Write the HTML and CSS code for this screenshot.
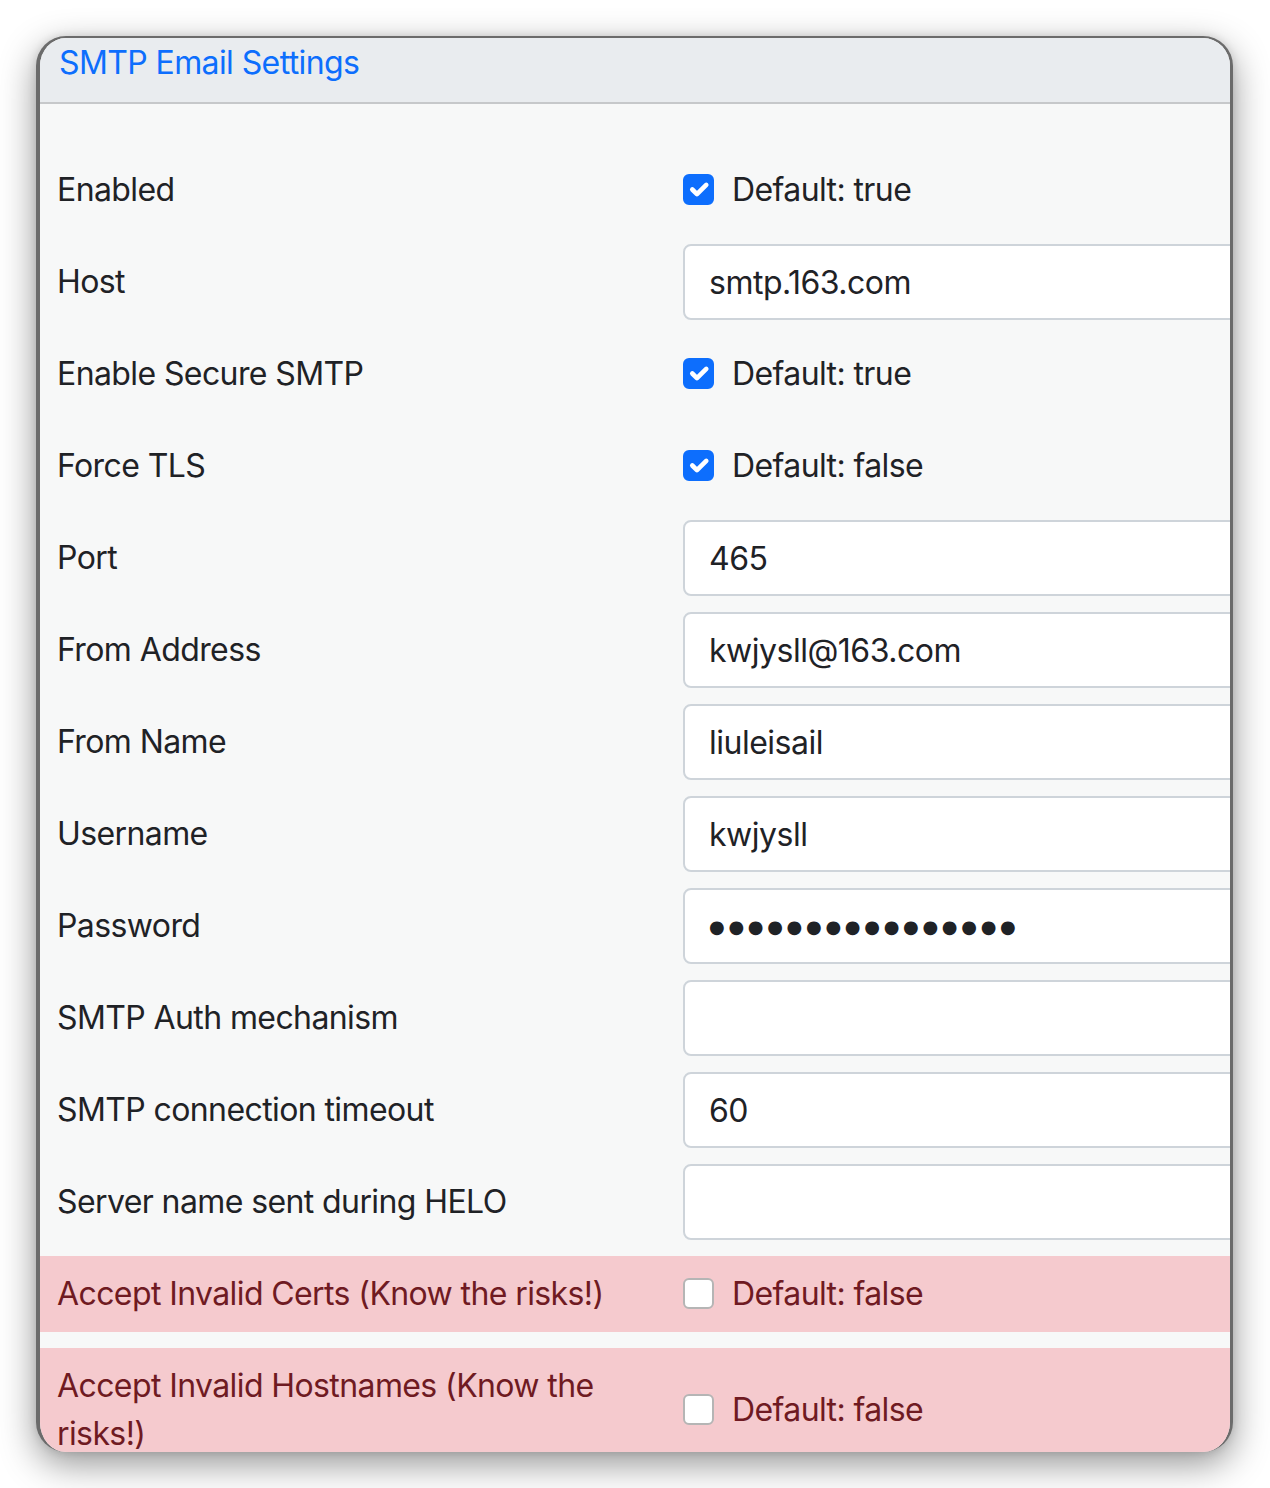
FILE: index.html
```html
<!DOCTYPE html>
<html lang="en">
<head>
<meta charset="utf-8">
<title>SMTP Email Settings</title>
<link rel="stylesheet" href="styles.css">
</head>
<body>
<div class="window">
  <div class="card-header"><span class="title">SMTP Email Settings</span></div>
  <div class="card-body">
    <div class="row">
      <label class="lbl">Enabled</label>
      <div class="ctrl"><span class="cb on"><svg viewBox="0 0 20 20"><path d="M6 10l3 3l6-6"/></svg></span><span class="hint">Default: true</span></div>
    </div>
    <div class="row">
      <label class="lbl">Host</label>
      <div class="ctrl"><input class="field" type="text" value="smtp.163.com"></div>
    </div>
    <div class="row">
      <label class="lbl">Enable Secure SMTP</label>
      <div class="ctrl"><span class="cb on"><svg viewBox="0 0 20 20"><path d="M6 10l3 3l6-6"/></svg></span><span class="hint">Default: true</span></div>
    </div>
    <div class="row">
      <label class="lbl">Force TLS</label>
      <div class="ctrl"><span class="cb on"><svg viewBox="0 0 20 20"><path d="M6 10l3 3l6-6"/></svg></span><span class="hint">Default: false</span></div>
    </div>
    <div class="row">
      <label class="lbl">Port</label>
      <div class="ctrl"><input class="field" type="text" value="465"></div>
    </div>
    <div class="row">
      <label class="lbl">From Address</label>
      <div class="ctrl"><input class="field" type="text" value="kwjysll@163.com"></div>
    </div>
    <div class="row">
      <label class="lbl">From Name</label>
      <div class="ctrl"><input class="field" type="text" value="liuleisail"></div>
    </div>
    <div class="row">
      <label class="lbl">Username</label>
      <div class="ctrl"><input class="field" type="text" value="kwjysll"></div>
    </div>
    <div class="row">
      <label class="lbl">Password</label>
      <div class="ctrl"><div class="field pw"><span class="dots">●●●●●●●●●●●●●●●●</span></div></div>
    </div>
    <div class="row">
      <label class="lbl">SMTP Auth mechanism</label>
      <div class="ctrl"><input class="field" type="text" value=""></div>
    </div>
    <div class="row">
      <label class="lbl">SMTP connection timeout</label>
      <div class="ctrl"><input class="field" type="text" value="60"></div>
    </div>
    <div class="row">
      <label class="lbl">Server name sent during HELO</label>
      <div class="ctrl"><input class="field" type="text" value=""></div>
    </div>
    <div class="row danger">
      <label class="lbl">Accept Invalid Certs (Know the risks!)</label>
      <div class="ctrl"><span class="cb"></span><span class="hint">Default: false</span></div>
    </div>
    <div class="row danger">
      <label class="lbl">Accept Invalid Hostnames (Know the risks!)</label>
      <div class="ctrl"><span class="cb"></span><span class="hint">Default: false</span></div>
    </div>
  </div>
</div>
</body>
</html>
```
FILE: styles.css
```css
html, body {
  margin: 0;
  padding: 0;
  background: #ffffff;
}

body {
  font-family: Inter, "Noto Sans", sans-serif;
  color: #1f2226;
  letter-spacing: -0.6px;
  padding: 36px 0 0 36px;
  min-height: 1488px;
  box-sizing: border-box;
}

.window {
  width: 1190px;
  height: 1414px;
  border-top: 2px solid #6b6b6b;
  border-left: 4px solid #6b6b6b;
  border-right: 3px solid #6b6b6b;
  border-radius: 30px;
  overflow: hidden;
  background: #f7f8f8;
  box-shadow: 0 12px 36px rgba(0, 0, 0, 0.42), 0 0 8px rgba(0, 0, 0, 0.12);
}

.card-header {
  background: #e9ecef;
  border-bottom: 2px solid #c6c8ca;
  height: 62px;
  padding: 1px 0 1px 19px;
}

.title {
  display: block;
  font-size: 32px;
  line-height: 48px;
  color: #0d6efd;
}

.card-body {
  padding-top: 48px;
}

.row {
  display: grid;
  grid-template-columns: 602px 1fr;
  column-gap: 24px;
  align-items: center;
  padding-left: 17px;
  margin-bottom: 16px;
}

.lbl {
  font-size: 32px;
  line-height: 48px;
  padding: 14px 0;
}

.ctrl {
  display: flex;
  align-items: center;
  gap: 18px;
  white-space: nowrap;
}

.hint {
  font-size: 32px;
  line-height: 48px;
}

.cb {
  width: 31px;
  height: 31px;
  box-sizing: border-box;
  border-radius: 6px;
  background: #ffffff;
  border: 2px solid #b5b5b5;
  display: inline-flex;
  align-items: center;
  justify-content: center;
  flex: none;
  margin-top: -2px;
}

.cb.on {
  background: #0d6efd;
  border-color: #0d6efd;
}

.cb svg {
  width: 31px;
  height: 31px;
  flex: none;
}

.cb svg path {
  fill: none;
  stroke: #ffffff;
  stroke-width: 3;
  stroke-linecap: round;
  stroke-linejoin: round;
}

.field {
  box-sizing: border-box;
  width: 620px;
  height: 76px;
  margin: 0;
  padding: 0 24px;
  border: 2px solid #ced4da;
  border-radius: 8px;
  background: #ffffff;
  font-family: Inter, "Noto Sans", sans-serif;
  font-size: 32px;
  letter-spacing: -0.5px;
  color: #1f2226;
  outline: none;
}

.pw {
  display: flex;
  align-items: center;
}

.dots {
  font-family: "DejaVu Sans", sans-serif;
  font-size: 18px;
  letter-spacing: 3.7px;
  color: #1f2226;
}

.danger {
  background: #f5cace;
  color: #6f1a22;
}

.danger .hint {
  color: #6f1a22;
}
```
